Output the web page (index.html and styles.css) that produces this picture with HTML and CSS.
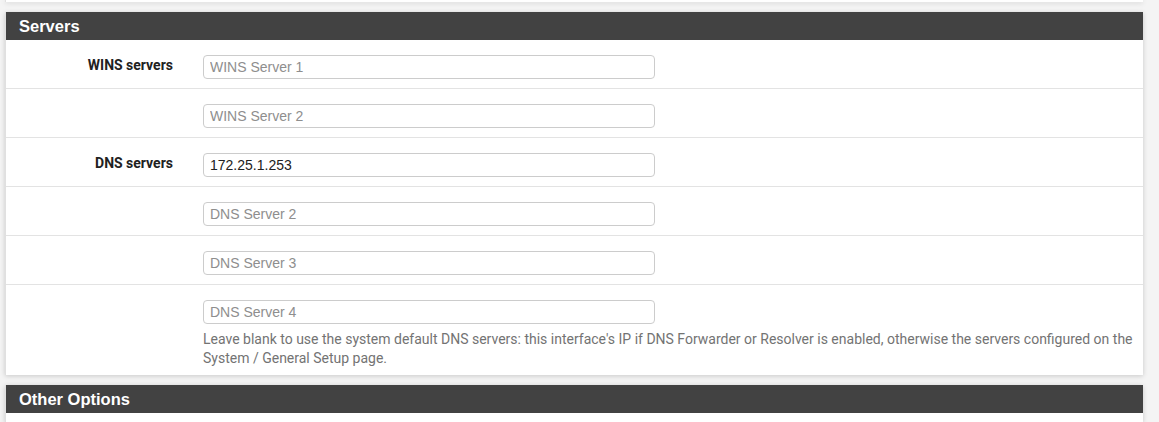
FILE: index.html
```html
<!DOCTYPE html>
<html lang="en">
<head>
    <meta charset="UTF-8">
    <title>Interfaces - DHCP Server</title>
    <link rel="stylesheet" href="styles.css">
</head>
<body>
    <div class="page">
        <div class="panel panel-prev"></div>

        <div class="panel">
            <div class="panel-heading">Servers</div>
            <div class="panel-body">
                <div class="form-row">
                    <label class="form-label">WINS servers</label>
                    <div class="form-field">
                        <input class="form-input" type="text" placeholder="WINS Server 1">
                    </div>
                </div>
                <div class="form-row">
                    <label class="form-label"></label>
                    <div class="form-field">
                        <input class="form-input" type="text" placeholder="WINS Server 2">
                    </div>
                </div>
                <div class="form-row">
                    <label class="form-label">DNS servers</label>
                    <div class="form-field">
                        <input class="form-input" type="text" value="172.25.1.253" placeholder="DNS Server 1">
                    </div>
                </div>
                <div class="form-row">
                    <label class="form-label"></label>
                    <div class="form-field">
                        <input class="form-input" type="text" placeholder="DNS Server 2">
                    </div>
                </div>
                <div class="form-row">
                    <label class="form-label"></label>
                    <div class="form-field">
                        <input class="form-input" type="text" placeholder="DNS Server 3">
                    </div>
                </div>
                <div class="form-row">
                    <label class="form-label"></label>
                    <div class="form-field">
                        <input class="form-input" type="text" placeholder="DNS Server 4">
                        <p class="help-block">Leave blank to use the system default DNS servers: this interface's IP if DNS Forwarder or Resolver is enabled, otherwise the servers configured on the System / General Setup page.</p>
                    </div>
                </div>
            </div>
        </div>

        <div class="panel">
            <div class="panel-heading">Other Options</div>
            <div class="panel-body panel-body-tail"></div>
        </div>
    </div>
</body>
</html>
```

FILE: styles.css
```css
body {
    margin: 0;
    background-color: #f4f4f4;
    font-family: "Roboto", "Liberation Sans", sans-serif;
    color: #212121;
}
.page {
    width: 1138px;
    margin-left: 5px;
}
.panel {
    background: white;
    margin-bottom: 10px;
    box-shadow: 0 1px 5px rgba(0,0,0,0.18);
    border-left: 1px solid #e0e0e0;
}
.panel-prev {
    height: 2px;
    margin-bottom: 10px;
}
.panel-heading {
    height: 28px;
    line-height: 28px;
    background-color: #424242;
    color: white;
    font-family: "Liberation Sans", Arial, sans-serif;
    font-weight: bold;
    font-size: 16.5px;
    padding-left: 13px;
}
.form-row {
    display: grid;
    grid-template-columns: 167px 1fr;
    column-gap: 30px;
    padding: 15px 6px 9px 0;
    border-bottom: 1px solid #e3e3e3;
}
.form-row:last-child {
    border-bottom: none;
    padding-bottom: 7px;
}
.form-label {
    text-align: right;
    font-weight: bold;
    font-size: 14px;
    line-height: 20px;
}
.form-field {
    min-width: 0;
}
.form-input {
    display: block;
    box-sizing: border-box;
    width: 452px;
    height: 24px;
    margin: 0;
    padding: 2px 6px;
    border: 1px solid #cccccc;
    border-radius: 4px;
    font-family: "Liberation Sans", Arial, sans-serif;
    font-size: 14px;
    color: #212121;
    background: white;
}
.form-input::placeholder {
    color: #8e8e8e;
}
.help-block {
    margin: 6px 0 0;
    font-size: 14px;
    line-height: 19px;
    color: #737373;
}
.panel-body-tail {
    height: 9px;
}
```
